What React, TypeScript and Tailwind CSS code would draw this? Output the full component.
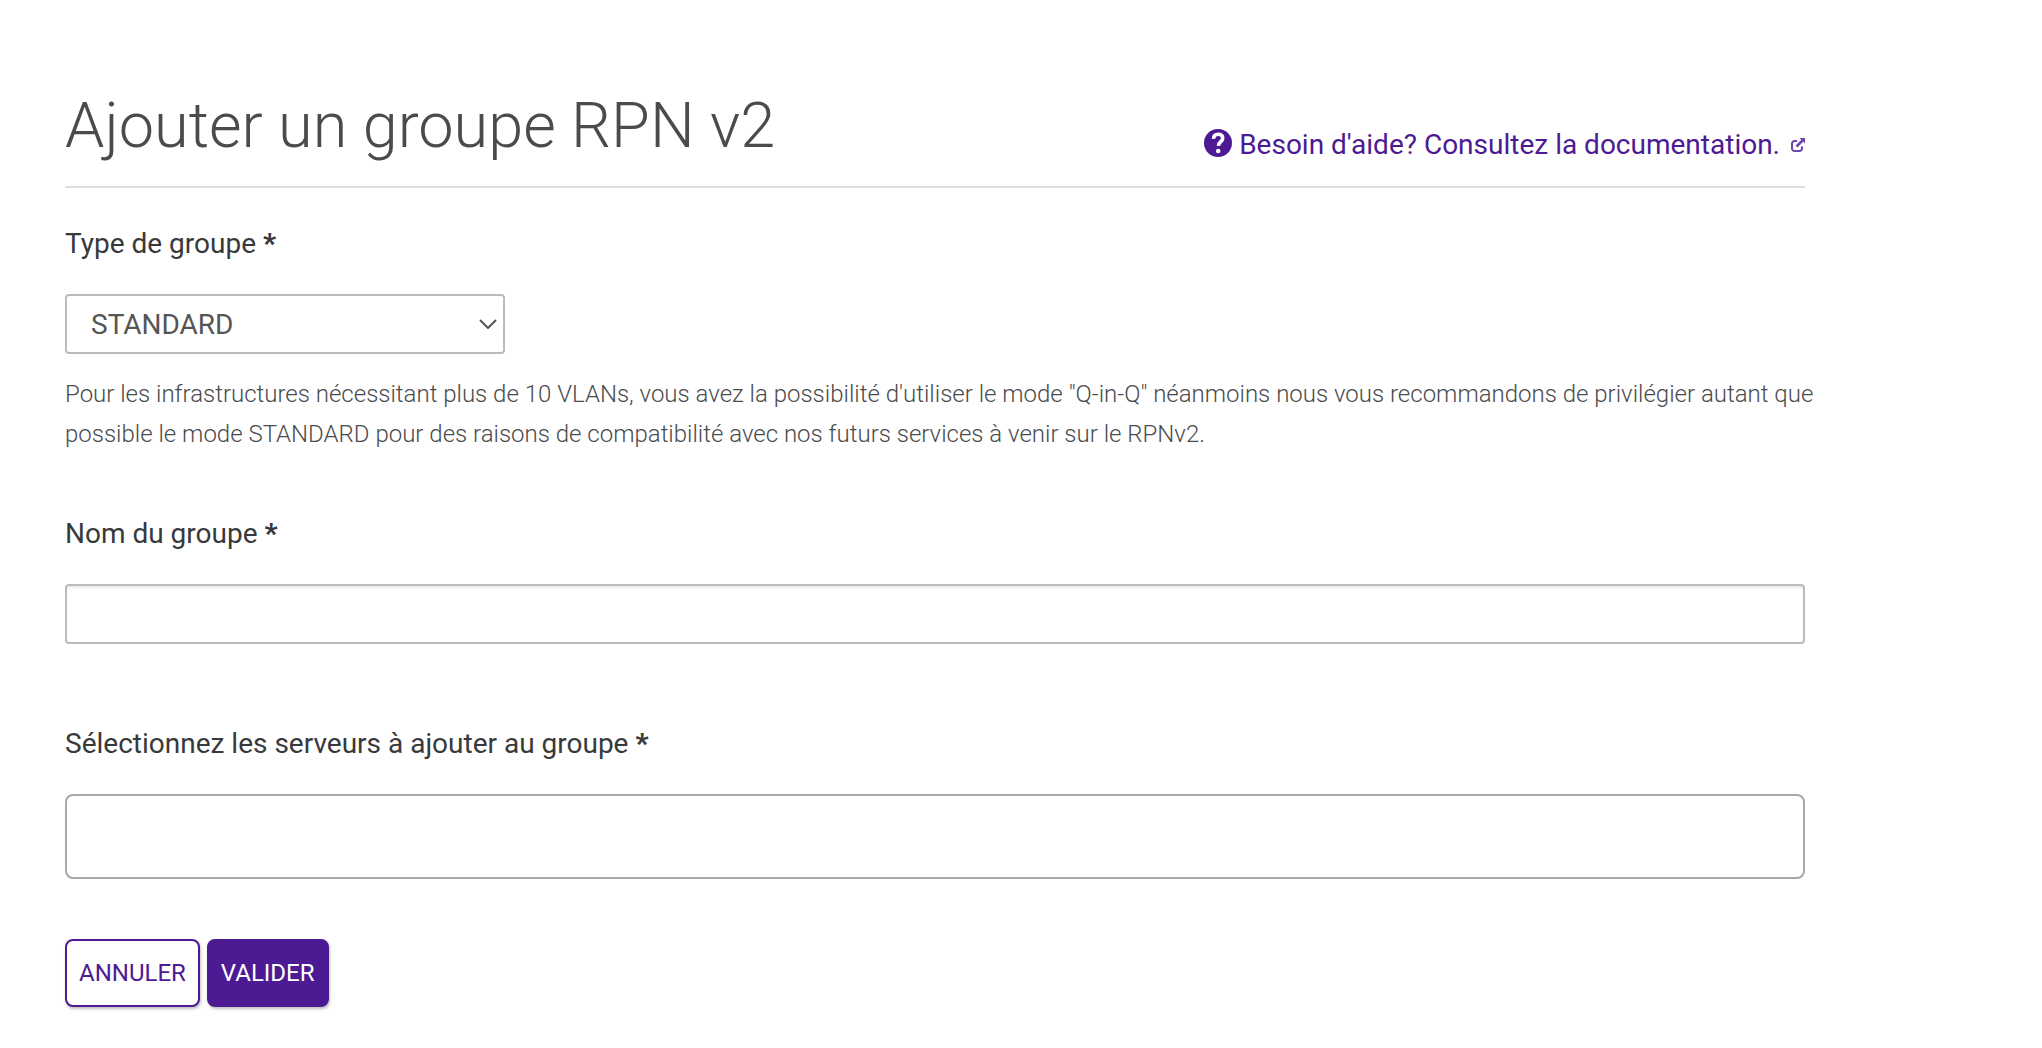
import React from 'react'

const QuestionIcon = () => (
  <svg viewBox="0 0 28 28" className="size-7 shrink-0 mb-1" aria-hidden="true">
    <circle cx="14" cy="14" r="14" fill="#4c1a93" />
    <path
      d="M9.500 9.800C9.700 6.800 11.300 5.200 14.100 5.200c2.900 0 4.600 1.600 4.600 4 0 3.400-4.100 3.600-4.300 7.700"
      fill="none"
      stroke="#fff"
      strokeWidth="3.600"
    />
    <circle cx="14.200" cy="22" r="2.300" fill="#fff" />
  </svg>
)

const ExternalIcon = () => (
  <svg
    viewBox="0 0 14 14"
    className="size-3.5 shrink-0"
    fill="none"
    stroke="#7043ab"
    strokeWidth="2"
    aria-hidden="true"
  >
    <path d="M6 3H3.500A2.500 2.500 0 0 0 1 5.500v5A2.500 2.500 0 0 0 3.500 13h5a2.500 2.500 0 0 0 2.500-2.500V8.500" />
    <path d="M5.500 8.500 11.500 2.500" strokeWidth="2.500" />
    <path d="M8.500 0H14v5.500z" fill="#7043ab" stroke="none" />
  </svg>
)

const FieldLabel = ({ htmlFor, children }: { htmlFor: string; children: React.ReactNode }) => (
  <label htmlFor={htmlFor} className="block text-[28px] leading-10 mb-[30px] text-[#38393b]">
    {children} <span className="font-black">*</span>
  </label>
)

const App = () => {
  return (
    <main className="px-[65px] pt-[87px] pb-10 bg-white text-[#4a4b4d] font-['Roboto',sans-serif]">
      <div className="max-w-[1740px]">
        <header className="flex items-end justify-between pb-[21px] border-b-2 border-[#dedede]">
          <h1 className="text-[63px] leading-[78px] font-light">Ajouter un groupe RPN v2</h1>
          <a href="#documentation" className="flex items-center text-[28px] leading-10 text-[#4c1a93]">
            <QuestionIcon />
            <span className="ml-[7px] mr-[11px]">Besoin d'aide? Consultez la documentation.</span>
            <ExternalIcon />
          </a>
        </header>

        <form className="pt-9">
          <FieldLabel htmlFor="type">Type de groupe</FieldLabel>
          <div className="relative w-[440px] max-w-full">
            <select
              id="type"
              className="block appearance-none w-full h-[60px] pt-0.5 pl-6 pr-10 border-2 border-[#bbb] rounded bg-white text-[28px] leading-10 text-[#555]"
            >
              <option>STANDARD</option>
              <option>Q-in-Q</option>
            </select>
            <svg
              viewBox="0 0 18 10"
              className="absolute right-2 top-[25px] w-[18px] h-[10px] pointer-events-none"
              fill="none"
              stroke="#555"
              strokeWidth="2"
              aria-hidden="true"
            >
              <path d="M1 1l8 8 8-8" />
            </svg>
          </div>
          <p className="mt-5 -mr-4 text-2xl leading-10 font-light">
            Pour les infrastructures nécessitant plus de 10 VLANs, vous avez la possibilité d'utiliser le mode
            "Q-in-Q" néanmoins nous vous recommandons de privilégier autant que possible le mode STANDARD pour
            des raisons de compatibilité avec nos futurs services à venir sur le RPNv2.
          </p>

          <div className="mt-[60px]">
            <FieldLabel htmlFor="name">Nom du groupe</FieldLabel>
            <input
              id="name"
              type="text"
              className="block w-full h-[60px] px-6 border-2 border-[#bbb] rounded text-[28px] shadow-[inset_0_2px_2px_rgba(0,0,0,0.08)]"
            />
          </div>

          <div className="mt-20">
            <FieldLabel htmlFor="servers">Sélectionnez les serveurs à ajouter au groupe</FieldLabel>
            <input
              id="servers"
              type="text"
              className="block w-full h-[85px] px-6 border-2 border-[#a8a8a8] rounded-lg text-[28px]"
            />
          </div>

          <div className="flex gap-[7px] mt-[60px] text-2xl">
            <button
              type="button"
              className="h-[68px] px-3 border-2 border-[#4c1a93] rounded-lg bg-white text-[#4c1a93] shadow-[1px_2px_3px_rgba(0,0,0,0.25)]"
            >
              ANNULER
            </button>
            <button
              type="submit"
              className="h-[68px] px-3 border-2 border-[#4c1a93] rounded-lg bg-[#4c1a93] text-white shadow-[1px_2px_3px_rgba(0,0,0,0.25)]"
            >
              VALIDER
            </button>
          </div>
        </form>
      </div>
    </main>
  )
}

export default App
